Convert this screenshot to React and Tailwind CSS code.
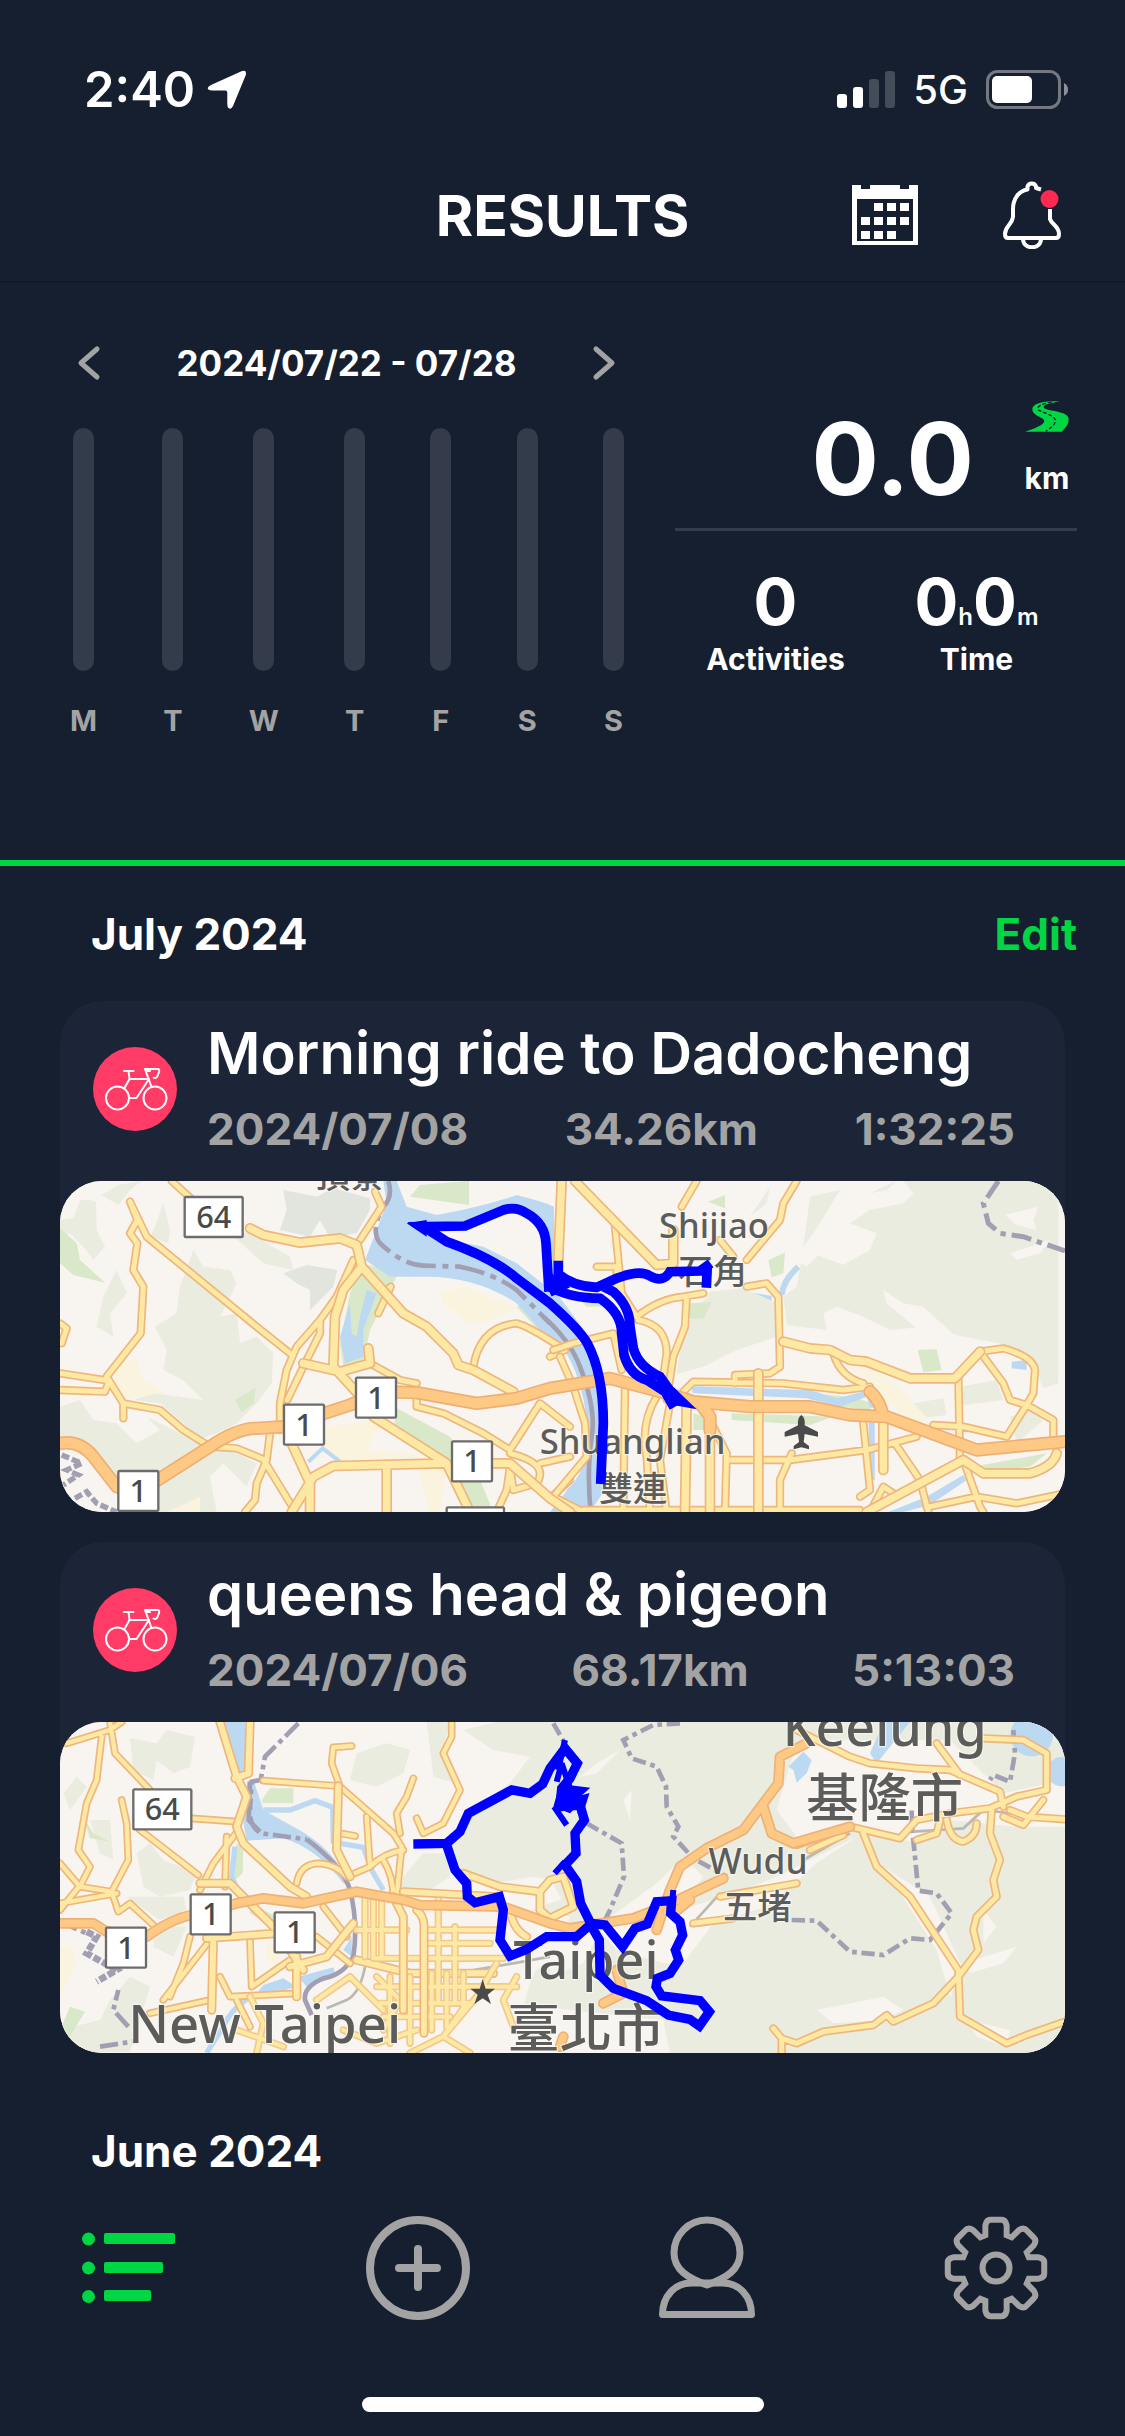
import React from "react";

const DAYS = ["M", "T", "W", "T", "F", "S", "S"];

function LocationArrow() {
  return (
    <svg className="h-10 w-10" viewBox="0 0 40 40" fill="#fff" aria-hidden="true">
      <path d="M34.500 1.300 Q40 -0.500 38.800 5 L26 36 Q24 40 21.500 38 Q20.300 37 20.300 34 V22.500 Q20.300 20.500 18.300 20.500 H5 Q0.500 20.300 0.800 18 Q1 16.300 4 15Z" />
    </svg>
  );
}

function Signal() {
  return (
    <svg className="h-[38px] w-[58px]" viewBox="0 0 58 38" aria-label="Signal">
      <rect x="0" y="23" width="10" height="14" rx="3" fill="#fff" />
      <rect x="16" y="16" width="10" height="21" rx="3" fill="#fff" />
      <rect x="32" y="8" width="10" height="29" rx="3" fill="#454c59" />
      <rect x="48" y="0" width="10" height="37" rx="3" fill="#454c59" />
    </svg>
  );
}

function Battery() {
  return (
    <svg className="h-[39px] w-[83px]" viewBox="0 0 83 39" aria-label="Battery">
      <rect x="1.500" y="1.500" width="72" height="36" rx="10" fill="none" stroke="#737883" strokeWidth="3" />
      <rect x="6" y="6" width="40" height="27" rx="5" fill="#fff" />
      <path d="M78 13 Q82 15 82 19.500 Q82 24 78 26Z" fill="#8b909a" />
    </svg>
  );
}

function CalendarIcon() {
  const cells = [
    [22, 18], [35, 18], [48, 18],
    [9, 32], [22, 32], [35, 32], [48, 32],
    [9, 46], [22, 46], [35, 46],
  ];
  return (
    <svg className="h-[60px] w-[66px]" viewBox="0 0 66 60" aria-hidden="true">
      <path fill="#fff" fillRule="evenodd" d="M0 0H9V4H18V0H48V4H57V0H66V60H0ZM5 14V56H61V14Z" />
      {cells.map(([x, y]) => (
        <rect key={x + "-" + y} x={x} y={y} width="9" height="8" fill="#fff" />
      ))}
    </svg>
  );
}

function BellIcon() {
  return (
    <svg className="h-[68px] w-[58px]" viewBox="0 0 58 68" fill="none" stroke="#fff" strokeWidth="4" strokeLinecap="round" strokeLinejoin="round" aria-hidden="true">
      <path strokeLinecap="butt" d="M38 8.500 L33 7 V5.500 A4.500 4.500 0 0 0 24.500 5.500 V8.500 C15 10 10 19 10 28 V36 C9 44 2 45 2 53 C2 56 3 57 5 57 H53 C55 57 56 56 56 53 C56 45 49 44 47 38 V28" />
      <path d="M20 58 C20 69 38 69 38 58" />
      <circle cx="46.500" cy="18" r="9" fill="#ff2850" stroke="none" />
    </svg>
  );
}

function RoadIcon() {
  return (
    <svg className="h-[31px] w-[44px]" viewBox="1156 154 132 93" aria-hidden="true">
      <path fill="#00d544" d="M1260 155 C1210 152 1178 162 1178 178 C1178 200 1214 202 1214 214 C1214 226 1180 238 1157 246 H1265 C1282 232 1287 220 1287 207 C1284 182 1212 185 1212 173 C1212 163 1240 160 1260 155Z" />
      <path fill="none" stroke="#161f2f" strokeWidth="4" strokeDasharray="11 6" d="M1236 158 C1206 162 1192 170 1195 179 C1200 188 1248 194 1247 214 C1246 226 1232 236 1218 245" />
    </svg>
  );
}

function BikeIcon() {
  return (
    <svg className="size-[84px]" viewBox="93 1046 84 84" fill="none" stroke="#fff" strokeWidth="2" strokeLinecap="round" strokeLinejoin="round" aria-hidden="true">
      <circle cx="117.500" cy="1097" r="11.500" />
      <circle cx="155" cy="1097" r="11.500" />
      <path d="M124 1070 H133.500 M128.500 1070 L129.500 1078 L124.500 1087 M129.500 1078 H149 M129 1097 H136.500 L149 1078" />
      <path d="M151.500 1086 L145 1068 H157.500 Q160 1068 159 1071 L157.500 1075 Q156 1078 153.500 1076.500 M146 1070 H150" />
    </svg>
  );
}

function Chevron({ flip }) {
  return (
    <svg className={flip ? "h-9 w-6 rotate-180" : "h-9 w-6"} viewBox="0 0 24 36" fill="none" stroke="#a3a3a3" strokeWidth="5" strokeLinecap="round" strokeLinejoin="round" aria-hidden="true">
      <path d="M20 4 L4 18 L20 32" />
    </svg>
  );
}

/* Draws every road twice: a darker casing first, the lighter surface on top. */
function Roads({ d, width, casing = "#eeb67c", fill = "#fde9a4" }) {
  return (
    <g fill="none" strokeLinejoin="round" strokeLinecap="round">
      <path d={d} stroke={casing} strokeWidth={width + 10} />
      <path d={d} stroke={fill} strokeWidth={width} />
    </g>
  );
}

function Shield({ x, y, w, children }) {
  return (
    <g>
      <rect x={x} y={y} width={w} height="120" rx="4" fill="#fff" stroke="#6c6c6c" strokeWidth="7" />
      {children && (
        <text x={x + w / 2} y={y + 93} textAnchor="middle" fontSize="92" fontWeight="500" fill="#4a4a4a">{children}</text>
      )}
    </g>
  );
}

function Place({ x, y, size, children }) {
  return (
    <text x={x} y={y} fontSize={size} textAnchor="middle" fontWeight="500" fill="#5c5c5a" stroke="#fbf9f5" strokeOpacity="0.7" strokeWidth="7" strokeLinejoin="round" paintOrder="stroke">
      {children}
    </text>
  );
}

const MAP_CLASS = "block aspect-[1005/331] w-full rounded-[42px] bg-[#f8f4f0] font-['Noto_Sans','Noto_Sans_CJK_TC',sans-serif]";

function DadochengMap() {
  return (
    <svg className={MAP_CLASS} viewBox="30 33 3015 993" preserveAspectRatio="xMidYMid slice" role="img" aria-label="Route map of the ride to Dadocheng">
      <rect x="30" y="33" width="3015" height="993" fill="#f8f4f0" />
      <g fill="#e9ecdf">
        <path d="M120 90 L138 95 L140 180 L165 230 L130 270 L100 230 L60 190 L30 200 V150 L70 145 L90 90Z" />
        <path d="M205 45 L275 33 L240 60 L205 105 L155 75Z" />
        <path d="M315 170 L340 100 L360 180 L355 220 L300 200Z" />
        <path d="M430 240 L460 290 L540 300 L560 340 L510 440 L560 430 L570 520 L620 500 L670 550 L665 640 L620 700 L560 760 L500 790 L440 810 L400 760 L330 700 L250 690 L310 670 L460 690 L400 630 L340 600 L350 540 L315 470 L380 430 L390 350Z" />
        <path d="M30 710 L90 690 L130 750 L200 760 L260 820 L330 780 L290 740 L390 790 L470 830 L560 850 L620 880 L590 950 L520 880 L480 920 L500 1026 L200 1026 L210 950 L140 860 L30 800Z" />
        <path d="M530 180 L600 190 L720 260 L730 300 L640 280Z M200 300 L230 370 L180 430 L190 500 L140 470 L160 380Z" />
      </g>
      <path fill="#e1e5de" d="M700 60 L800 80 L850 55 L960 85 L960 120 L920 190 L840 205 L810 150 L780 200 L690 180 L710 120Z M700 310 L770 285 L862 300 L850 350 L780 420 L780 360 L740 340Z" />
      <path fill="#faf3dd" d="M1170 365 L1250 350 L1400 415 L1330 450 L1250 460 L1180 400Z M830 770 L1000 750 L950 840 L1150 860 L860 885 L820 830Z M1100 890 L1190 895 L1170 1026 L1140 1026Z M200 580 L260 565 L275 625 L340 670 L230 685 L190 650Z M350 1026 L450 980 V1026Z" />
      <g fill="#d9e8c8">
        <path d="M30 175 L80 220 L90 270 L165 338 L70 315 L30 280Z M1110 45 L1257 33 V105 L1080 80Z M555 690 L617 653 L612 700 L575 727Z" />
        <path d="M935 280 L1045 310 L960 480 L940 575 L880 590 L870 520 L900 370Z M1040 715 L1200 800 L1290 930 L1330 1026 H1265 L1180 880 L1030 780Z M1420 400 L1480 430 L1560 540 L1520 540 L1400 410Z" />
      </g>
      <g fill="#bdd9f2">
        <path d="M1000 33 H1040 L1070 110 L1160 135 Q1300 110 1400 75 Q1480 95 1512 110 V360 L1580 450 Q1650 540 1665 760 V960 L1620 1026 L1530 1000 L1550 960 Q1620 900 1610 760 Q1600 620 1530 520 L1480 490 L1400 400 Q1280 320 1130 320 L1020 320 L945 270 L980 180 L1010 100Z" />
        <path d="M950 360 L980 370 L940 480 L940 560 L885 580 L870 500 L900 400 L905 490 L920 500 L930 440Z M1500 1026 L1560 950 V1026Z" />
      </g>
      <path fill="#f8f4f0" d="M1110 175 L1250 182 L1390 120 L1450 150 L1475 200 L1490 350 L1400 280 L1300 230 L1170 205Z" />
      <path fill="none" stroke="#bdd9f2" strokeWidth="12" d="M775 875 L818 835 L870 875" />
      <g transform="translate(1500 0)">
        <path fill="#e9ecdf" d="M900 160 L960 120 L1060 100 L1090 70 L1060 33 H1525 V640 L1480 655 L1450 580 L1350 520 L1240 500 L1120 470 L1020 480 L940 440 L860 410 L820 430 L830 480 L710 465 L700 380 L740 350 L760 240 L880 285 L960 240 L980 190Z M480 365 L580 355 L680 400 L680 500 L560 540 L460 590 L380 612 L400 480Z M600 140 L660 50 L650 100Z M780 80 L870 60 L840 110 L790 190 L760 230Z M960 70 L1040 33 L1010 60Z M1230 650 L1340 630 L1360 690 L1240 705Z M1090 700 L1180 685 L1190 735 L1110 745Z M1380 740 L1440 720 L1480 750 L1400 820Z" />
        <path fill="#f8f4f0" d="M1365 135 L1465 110 L1450 150 L1460 180 L1400 165Z M1000 360 L1060 400 L1120 410 L1240 520 L1130 500 L1010 400Z M1380 250 L1500 210 L1470 250 L1400 270Z M800 180 L860 190 L800 260 L770 290 L740 270Z" />
        <path fill="#d9e8c8" d="M475 95 L525 75 V115Z M655 270 L705 248 L700 310 L665 322Z M420 400 L485 395 L460 445 L420 447Z M1103 540 L1160 538 L1175 600 L1120 607Z M545 730 L850 740 L780 765 L545 750Z M430 730 L465 740 V780 H430Z M1270 890 L1490 850 L1440 890 L1320 905Z M780 670 L900 680 L970 700 L960 720 L830 705Z M80 380 L170 395 L160 410 L110 410Z" />
        <path fill="#faf3dd" d="M890 590 L990 600 L1140 750 L1100 755 L1010 700 L960 630Z" />
        <path fill="#bdd9f2" d="M420 648 L600 655 L780 660 L860 685 L960 660 L982 715 L960 712 L950 680 L870 712 L770 685 L430 670Z M1385 575 L1430 570 V600 L1385 595Z M1015 1026 L1130 980 L1240 915 L1250 930 L1140 1005 L1060 1026Z M610 368 L665 378 V392Z" />
        <path fill="none" stroke="#bdd9f2" strokeWidth="18" d="M965 755 V930 M745 290 Q700 330 695 375" />
      </g>
      <path fill="none" stroke="#a29fb2" strokeWidth="14" strokeDasharray="90 20 18 20" d="M1015 33 Q1030 80 1000 110 Q960 180 990 220 Q1060 285 1120 287 L1230 290 Q1330 310 1400 360 L1500 460" />
      <path fill="none" stroke="#a29fb2" strokeWidth="14" d="M1480 440 Q1560 510 1590 590 Q1640 720 1625 800 Q1610 900 1622 1026" />
      <path fill="none" stroke="#a29fb2" strokeWidth="15" strokeDasharray="60 18 16 18" d="M2845 33 L2800 100 L2815 160 L2850 190 L2920 200 L3045 243" />
      <path fill="none" stroke="#a29fb2" strokeWidth="16" strokeDasharray="24 9" d="M35 855 L95 880 L50 900 L85 915 L40 945 M75 985 L110 965 L140 1000 L200 1026" />
      <Roads width={15} d="M240 95 L262 150 L240 190 L262 220 L250 300 L280 350 L272 490 L170 620 L220 700 L220 745 M240 95 L290 200 L620 470 L720 550 M30 610 L175 632 M30 660 L165 665 L178 632 M220 700 L330 720 L400 780 L480 830 L560 835 L640 868 L730 1015 M660 790 L650 870 L620 940 L615 990 L585 1026 M365 33 L450 110 M975 65 L995 110 L930 210 M1270 590 Q1290 470 1400 460 Q1440 470 1545 540 L1500 560 M1010 360 L1022 350 L985 430 M910 270 L860 380 L810 450 L740 530 L710 600 L690 700 V780 M810 450 V490 L760 590 L712 690 M960 580 L1050 630 L1100 640 M1100 690 V710 L1180 730 L1300 790 L1380 840 L1470 700 L1560 770 M1380 850 Q1500 880 1460 940 L1390 960 L1380 890 L1370 960 L1340 1026 M1500 985 L1560 930 M1470 880 L1560 860 M30 460 L50 475 L35 520" />
      <Roads width={15} d="M1640 290 H1700 V370 M1895 110 L1940 33 M1695 170 L1715 370 L1760 440 Q1830 385 1900 380 L1960 370 M2240 33 L2200 100 L2190 150 L2090 270 M2010 210 L2050 260 M1910 380 L1905 470 L1870 560 L1850 690 M1765 450 Q1850 465 1850 550 L1840 620 M2090 350 L2150 340 L2185 380 L2190 590 L2160 610 L2055 615 V640 M2350 550 Q2370 620 2440 640 M1900 665 L1930 635 L2200 640 L2380 660 L2460 650 M2030 870 L2220 870 L2450 840 L2600 800 M2225 850 L2190 930 V1026 M2440 760 L2460 960 L2430 980 M2535 820 L2610 930 L2635 1026 M2740 870 L2790 1010 L2800 1026 M2460 1026 L2500 950 L2530 970 M2630 1012 L2780 980 L2900 1000 L3045 970 M1510 540 L1570 520 L1690 490 L1715 600 M1530 560 L1570 650 L1605 760 L1610 860 L1510 980 L1600 1026 M1725 650 L1720 1026 M1820 680 Q1770 760 1790 860 L1800 1026 M1860 700 L1830 870 L1850 1026 M1990 770 L2030 850 L2025 1026 M1600 1020 H2430 M2725 620 L2730 870 M2650 765 L2740 770 L2870 800 L2930 705 L3010 750 V820 M2790 545 L2860 640 L2880 690 L2930 705 L2950 670 L2955 600 Q2950 560 2860 535 L2790 545" />
      <Roads width={22} d="M600 175 L640 195 L750 218 L870 205 L920 225 L935 290 L880 360 L855 440 L850 590 L950 700 M760 580 L870 605 L960 580 L955 535 M935 290 L1060 430 L1130 470 L1210 550 L1225 585 L1270 600 L1390 665 M720 810 L780 940 V1026 M725 1026 L790 920 L850 888 L1180 880 M1330 880 H1380 L1500 985 L1560 1026 M1010 885 V1026 M970 740 L1190 880 L1260 1026 M1535 33 L1525 270 M1575 33 L1820 285 L1870 280 V180 M2200 515 L2280 535 L2340 540 L2400 570 L2450 575 L2580 625 L2715 625 L2790 545 M2125 610 V1026 M1910 700 L1905 1026 M1980 740 V1026 M2500 760 V900 M2450 1026 L2740 870 L2800 910 L2940 910 Q3010 890 3020 850" />
      <Roads width={30} casing="#efaf72" fill="#fdc985" d="M30 820 Q90 810 130 860 L200 950 L260 970 L480 830 Q560 775 620 775 L700 770 L900 705 L1000 665 L1100 668 L1280 700 L1400 685 L1500 655 L1680 625 L1850 670 L1930 695 L2100 710 L2280 710 L2400 735 L2510 740 L2780 840 L3045 815 M1950 700 L1980 740 V780 M2500 740 Q2490 690 2460 665" />
      <Shield x={404} y={81} w={174}>64</Shield>
      <Shield x={702} y={704} w={120}>1</Shield>
      <Shield x={918} y={623} w={120}>1</Shield>
      <Shield x={1206} y={814} w={120}>1</Shield>
      <Shield x={205} y={903} w={120}>1</Shield>
      <Shield x={1190} y={1012} w={172} />
      <Place x={900} y={53} size={103}>頂寮</Place>
      <Place x={1992} y={203} size={104}>Shijiao</Place>
      <Place x={1988} y={342} size={103}>石角</Place>
      <Place x={1748} y={852} size={104}>Shuanglian</Place>
      <Place x={1749} y={992} size={103}>雙連</Place>
      <path fill="#4a4a4a" d="M2254 735 Q2266 742 2264 766 L2304 786 V800 L2264 792 L2261 816 L2277 828 V838 L2254 832 L2231 838 V828 L2247 816 L2244 792 L2204 800 V786 L2244 766 Q2242 742 2254 735Z" />
      <g fill="none" stroke="#0000ff" strokeWidth="29" strokeLinejoin="miter">
        <path d="M1497 365 L1488 220 Q1485 160 1430 130 Q1400 108 1360 120 L1245 168 L1120 170 L1190 215 Q1330 265 1400 325 L1500 400 Q1590 480 1612 520 Q1660 610 1660 760 L1652 942" />
        <path d="M1525 272 V312 Q1570 350 1640 352 L1700 325 Q1770 298 1800 318 Q1840 340 1860 305 L1950 303 L1982 280 M1972 285 L1969 353" />
        <path d="M1500 350 Q1560 385 1650 385 Q1715 430 1715 490 L1722 555 Q1740 615 1790 630 L1845 665 L1872 712 M1660 350 L1690 365 Q1740 410 1740 470 L1750 535 Q1765 590 1830 620 L1880 690" />
        <path strokeWidth="22" d="M1500 320 L1540 350 L1500 370" />
      </g>
      <path fill="#00f" d="M1070 160 L1130 150 V200Z M1870 650 L1940 718 L1870 705Z" />
    </svg>
  );
}

function PigeonMap() {
  return (
    <svg className={MAP_CLASS} viewBox="30 36 3015 993" preserveAspectRatio="xMidYMid slice" role="img" aria-label="Route map of the ride to queens head">
      <rect x="30" y="36" width="3015" height="993" fill="#f8f4f0" />
      <g fill="#e9ecdf">
        <path d="M240 85 L320 100 L350 60 L435 80 L420 170 L370 190 L320 150 L310 210 L250 180Z M80 200 L110 230 L60 300 L40 250Z M120 330 L180 330 L190 450 L150 430Z M260 430 L300 400 L340 450 L440 490 L420 540 L330 560 L280 530Z M230 560 L400 560 L410 600 L330 630Z M320 650 L410 650 L370 740 L310 710Z M30 960 L150 930 L180 870 L240 800 L300 830 L240 1026 H30Z" />
        <path d="M920 130 L1010 100 L1080 120 L1060 190 L980 230 L900 210Z M1130 36 H1200 L1175 130 L1220 220 L1150 200Z M1240 60 L1340 36 H1560 V520 L1450 500 L1330 520 L1220 480 L1190 400 L1260 300 L1380 220 L1440 140 L1330 120Z M1060 500 L1120 430 L1190 430 L1200 500 L1130 545 H1050Z M1440 600 L1560 560 V620Z" />
      </g>
      <path fill="#e9ecdf" d="M1500 36 H3045 V1029 H1860 L1840 930 L1560 900 L1400 880 L1420 800 L1500 760 L1560 620 L1500 500Z" />
      <g fill="#f8f4f0">
        <path d="M1820 520 L1900 440 L1960 500 L1880 600 L2030 560 L2180 500 L2280 450 L2420 380 L2300 460 L2150 590 L1990 640 L1900 760 L1840 760 L1700 720 L1640 650Z M2180 300 L2230 130 L2290 90 H2700 L2860 250 L3045 210 V350 L2900 350 L2700 330 L2600 400 L2380 340 L2240 380Z" />
        <path d="M1590 200 L1640 160 L1710 120 L1640 190Z M1720 270 L1745 240 L1740 330Z M1500 620 L1640 680 L1600 760 L1500 800Z M2500 470 L2640 560 L2740 780 L2700 860 L2660 720Z M2800 600 L2840 650 L2800 700Z M2740 760 L2900 710 L2860 760 L2760 790Z M2300 900 L2500 860 L2560 900 L2500 930 L2350 940Z M2750 930 L2880 960 L2870 1010 L2780 980Z" />
        <path d="M1270 740 L1480 720 L1440 820 L1380 1029 H1250Z" />
      </g>
      <path fill="#d9e8c8" d="M635 270 L660 235 H730 V280 H640Z M560 400 L580 420 L578 490 L555 510 L540 460Z M30 960 L60 890 L105 905 L60 980Z M600 580 L680 620 L660 650 L600 610Z M100 320 L130 370 L180 395 L120 385Z" />
      <path fill="#faf3dd" d="M30 720 L60 700 L80 760 L30 860Z M650 690 L700 720 L680 770 L650 750Z" />
      <g fill="#bdd9f2">
        <path d="M518 36 H585 L590 180 L565 192Z M592 215 H612 L640 300 L730 350 Q850 410 905 530 L880 520 Q800 415 700 385 L590 392 L580 340Z M620 850 L640 825 L700 805 L740 830 L650 855Z M745 800 L850 772 L860 800 L770 830Z M880 720 L905 680 V740Z" />
        <path d="M2215 170 L2260 125 L2285 150 L2270 190 L2240 218 L2230 180Z M2460 130 L2500 36 H2580 L2520 110 L2480 160Z" />
        <circle cx="2945" cy="75" r="64" />
        <circle cx="3035" cy="185" r="44" />
      </g>
      <g fill="none" stroke="#bdd9f2" strokeWidth="16">
        <path d="M640 300 L720 300 L795 272 L848 292 L850 400 M870 400 L940 412 L965 480 L1000 540 M555 410 L545 500 L572 560 M600 860 Q540 900 520 950 L470 1029" />
      </g>
      <g fill="none" stroke="#a29fb2" strokeWidth="14">
        <path strokeDasharray="55 14 14 14" d="M745 40 L645 140 L632 210 L605 215 L600 300 M600 320 Q610 370 650 372 L770 388 M30 635 L110 670 M235 950 L190 900 L205 840 M150 1010 L265 992" />
        <path strokeWidth="20" strokeDasharray="22 7" d="M110 665 L140 680 L110 730 L200 780 L140 815" />
        <path d="M600 215 L596 330 L630 365 M770 388 Q880 470 900 540 Q925 640 910 740 Q880 795 820 805 Q760 830 765 870 L785 915" />
        <path strokeDasharray="40 14 14 14" d="M1510 40 L1550 110 M1610 340 L1715 400 L1722 500 L1680 600 L1660 640 M1890 40 L1810 45 L1720 90 L1745 145 L1820 170 L1848 230 L1850 290 L1885 350 L1870 380 L1930 445 L2030 500 M2225 630 L2300 632 L2400 725 L2500 735 L2580 685 L2640 690 L2705 610 L2660 550 L2605 542 L2585 340 L2585 300 M2890 60 L2895 130 L2880 215 L2830 195 L2820 210" />
        <path stroke="#b8bab2" strokeWidth="8" d="M945 770 Q930 850 890 870 L830 895 M2590 365 L2740 355 L2800 300 L3045 330 M2400 370 L2260 450 M1270 780 L1390 760 L1500 740 M1920 650 L2010 550" />
      </g>
      <Roads width={13} d="M180 36 L195 130 L300 240 M155 80 L140 210 L110 280 L85 420 L120 470 L95 520 L30 600 M50 100 L180 60 L215 36 M30 460 L90 530 L185 545 L235 450 L230 340 L215 270 M185 545 L205 605 L240 580 L310 645 M270 360 L445 495 M425 325 L560 335 M640 212 L865 228 M905 108 L850 112 L845 160 L870 230 L1030 370 L1055 410 L1040 560 M1050 370 L1040 310 L1070 260 L1090 205 M1205 36 V80 L1180 130 L1230 240 L1180 340 L1120 370 L1100 325 M565 360 L490 460 L450 540 M530 380 L525 530 M740 520 Q750 460 810 460 Q860 465 890 500 L960 470 Q1000 430 1060 420 M950 320 L960 470 M870 370 L915 378 M1000 450 Q1030 500 1030 560 M420 680 L400 760 L360 860 M340 870 L480 690 M600 690 L605 830 L720 750 M510 800 L540 860 L740 850 M300 910 L480 870 M800 680 L900 760 M820 590 L890 680 M560 870 L600 950 M30 580 L200 550" />
      <Roads width={18} d="M510 36 L560 200 L590 260 L560 350 L580 400 L720 530 L770 560 M600 36 L595 190 L555 205 M865 228 L860 420 L900 500 M450 520 L540 520 L680 660 M470 685 L680 670 M490 690 L485 900 M720 770 L830 740 L910 640 M740 740 V860 M720 720 L760 780 M920 750 L1080 790 L1330 790" />
      <Roads width={12} casing="#f3c98b" d="M920 660 H1070 M1120 660 H1340 M1120 700 H1320 M980 745 H1360 M980 830 H1400 M990 880 H1260 M1000 920 H1200 M945 560 V740 M970 560 V745 M995 560 V740 M1020 800 V1000 M1080 800 V1000 M1145 790 V960 M1165 560 V870 M1190 790 V950 M1215 650 V880 M1240 790 V900 M980 800 L1050 870 L1000 960 M1400 800 L1360 870 L1390 950 M800 870 L900 800 L1000 900 M880 960 L980 1000 L1100 960 M560 960 L700 1010 M1250 880 L1180 980 L1080 1029 M1340 760 L1280 860 L1180 980 L1260 1029 M600 860 L640 940 L620 1029" />
      <Roads width={17} d="M1030 560 L1060 620 V900 M1100 600 Q1125 620 1122 660 V970 M1380 600 Q1390 660 1430 680 M1240 490 L1350 530 L1470 545 L1500 510 L1540 500 L1570 590 L1500 625 L1470 600 V545 M1060 545 L1340 560" />
      <Roads width={15} d="M2140 285 L2165 370 L2240 405 L2400 350 L2550 385 L2600 330 L2700 310 L2820 295 L2900 260 L2990 240 L2990 130 L2920 90 L2800 85 M2240 60 L2400 140 L2460 160 L2600 175 L2700 180 L2850 245 L2860 290 M2660 100 L2730 195 M2440 370 L2480 470 L2580 560 L2725 780 L2730 920 L2870 1000 L2930 975 L3045 935 M2825 300 L2820 370 L2850 450 L2830 510 L2840 560 L2780 620 L2770 660 L2785 720 L2725 800 L2650 880 L2530 935 L2510 915 L2470 945 L2320 965 L2240 1000 L2195 985 L2170 955 M2195 990 V1029 M2880 300 L2930 320 L3045 328 M1930 640 L2050 625 M2010 560 L2240 520 M2280 420 L2380 375 M2600 390 L2660 370 L2670 330 M2690 330 Q2700 390 2740 395 Q2780 380 2780 340 M2860 320 L2920 345 L2980 270" />
      <Roads width={22} casing="#efb176" fill="#fdc985" d="M30 640 L130 640 L170 665 L290 680 Q380 615 450 612 L560 580 L640 565 L760 580 L920 545 L1060 570 L1110 585 L1360 590 L1500 640 L1560 655 L1750 625 L1840 590 L2020 505 M2270 100 L2190 140 L2185 220 L2140 280 L2080 360 L1970 415 L1890 470 L1860 540 L1820 660 M2140 290 L2165 370 L2230 400 L2400 350 M1870 610 L1920 570 M1700 780 L1720 850 L1660 880 M1540 980 L1530 1010" />
      <Shield x={250} y={238} w={174}>64</Shield>
      <Shield x={422} y={553} w={120}>1</Shield>
      <Shield x={674} y={607} w={120}>1</Shield>
      <Shield x={168} y={653} w={120}>1</Shield>
      <path fill="#4a4a4a" d="M1298 808 L1307 836 H1335 L1313 854 L1323 882 L1298 865 L1273 882 L1283 854 L1261 836 H1289Z" />
      <Place x={644} y={998} size={158}>New Taipei</Place>
      <Place x={1608} y={808} size={156}>Taipei</Place>
      <Place x={1608} y={1012} size={157}>臺北市</Place>
      <Place x={2504} y={108} size={156}>Keelung</Place>
      <Place x={2504} y={320} size={157}>基隆市</Place>
      <Place x={2124} y={492} size={106}>Wudu</Place>
      <Place x={2122} y={628} size={103}>五堵</Place>
      <g fill="none" stroke="#0000ff" strokeWidth="28" strokeLinejoin="miter" strokeMiterlimit="3">
        <path d="M1090 402 L1190 400 L1230 365 L1255 310 L1385 240 L1440 250 L1478 222 L1500 175 L1545 115 L1582 160 L1560 205 L1535 235 L1530 290 L1590 285 L1603 330 L1575 370 L1578 430 L1545 465 L1580 515 L1592 580 L1622 640" />
        <path d="M1190 405 L1215 480 L1250 520 L1252 560 L1275 578 L1348 560 L1360 600 L1350 690 L1380 738 L1430 718 L1490 680 H1580 L1625 640 L1665 645 L1718 710 L1755 655 L1792 642 L1820 575 L1865 572 L1862 610 L1890 635 L1898 675 L1876 720 L1886 750 L1860 790 L1822 805 L1818 830 L1835 858 L1950 872 L1978 905 L1948 948 L1920 928 L1855 915 L1790 872 L1690 835 L1650 795 L1648 690 L1622 645" />
        <path strokeWidth="18" d="M1520 215 L1535 160 L1560 235 L1600 240 L1560 275 L1605 262 L1590 310 M1512 290 L1550 345 M1514 490 L1545 455 M1862 620 L1870 540 M1524 180 L1545 90" />
      </g>
      <path fill="#00f" d="M1530 220 L1570 235 L1600 270 L1560 310 L1510 290Z" />
    </svg>
  );
}

const RIDES = [
  { title: "Morning ride to Dadocheng", date: "2024/07/08", distance: "34.26km", time: "1:32:25", Map: DadochengMap },
  { title: "queens head & pigeon", date: "2024/07/06", distance: "68.17km", time: "5:13:03", Map: PigeonMap },
];

function RideCard({ ride }) {
  const { Map } = ride;
  return (
    <article className="rounded-[42px] bg-[#1b2537]">
      <div className="flex h-[180px] items-center gap-[30px] pr-[50px] pb-1 pl-[33px]">
        <span className="size-[84px] shrink-0 rounded-full bg-[#ff3b66]">
          <BikeIcon />
        </span>
        <div className="min-w-0 flex-1 pt-1">
          <h3 className="truncate text-[58px] leading-[76px] font-semibold">{ride.title}</h3>
          <p className="flex justify-between text-[44px] leading-[76px] font-bold text-[#a3a3a3]">
            <time>{ride.date}</time>
            <span>{ride.distance}</span>
            <span>{ride.time}</span>
          </p>
        </div>
      </div>
      <Map />
    </article>
  );
}

function MonthHeader({ children, action }) {
  return (
    <div className="flex h-[135px] items-center justify-between pr-12 pl-[91px] text-[44px] font-bold">
      <h2>{children}</h2>
      {action}
    </div>
  );
}

function gearPath() {
  const n = 8;
  let d = "";
  for (let i = 0; i < n; i++) {
    const base = (i * 2 * Math.PI) / n;
    const p = (r, deg) => {
      const a = base + (deg * Math.PI) / 180;
      return (52 + r * Math.sin(a)).toFixed(2) + " " + (52 - r * Math.cos(a)).toFixed(2);
    };
    d += (i ? "L" : "M") + p(34.500, -18) + "L" + p(44, -14) + "Q" + p(49.500, -11) + " " + p(48.500, -6);
    d += "L" + p(48.500, 6) + "Q" + p(49.500, 11) + " " + p(44, 14) + "L" + p(34.500, 18);
  }
  return d + "Z";
}

function TabBar() {
  return (
    <nav className="shrink-0" aria-label="Main">
      <div className="flex h-[122px] items-center justify-between px-[77px]">
        <a href="#results" aria-label="Results" aria-current="page">
          <svg className="h-[104px] w-[104px]" viewBox="0 0 104 104" fill="#00d544" aria-hidden="true">
            <circle cx="11.500" cy="23" r="6.500" />
            <circle cx="11.500" cy="52" r="6.500" />
            <circle cx="11.500" cy="80.500" r="6.500" />
            <rect x="27" y="17" width="71" height="11" rx="2" />
            <rect x="27" y="46" width="59" height="11" rx="2" />
            <rect x="27" y="74" width="47" height="11" rx="2" />
          </svg>
        </a>
        <a href="#add" aria-label="Add activity">
          <svg className="h-[104px] w-[104px]" viewBox="0 0 104 104" fill="none" stroke="#a3a3a3" strokeWidth="8" strokeLinecap="round" aria-hidden="true">
            <circle cx="52" cy="52" r="48" />
            <path d="M33 52 H71 M52 33 V71" />
          </svg>
        </a>
        <a href="#profile" aria-label="Profile">
          <svg className="h-[104px] w-[104px]" viewBox="0 0 104 104" fill="none" stroke="#a3a3a3" strokeWidth="7" strokeLinejoin="round" aria-hidden="true">
            <path d="M52 69 C33 62 19 54 19 37 A33 33 0 0 1 85 37 C85 54 71 62 52 69Z" />
            <path d="M7.500 98.500 C7.500 80 20 67 36 67 H68 C84 67 96.500 80 96.500 98.500Z" />
          </svg>
        </a>
        <a href="#settings" aria-label="Settings">
          <svg className="h-[104px] w-[104px]" viewBox="0 0 104 104" fill="none" stroke="#a3a3a3" strokeWidth="6" aria-hidden="true">
            <path d={gearPath()} />
            <circle cx="52" cy="52" r="13.500" />
          </svg>
        </a>
      </div>
      <div className="flex h-[107px] items-end justify-center pb-6">
        <div className="h-[15px] w-[402px] rounded-full bg-white" />
      </div>
    </nav>
  );
}

export default function App() {
  return (
    <div className="flex h-screen flex-col bg-[#161f2f] font-['Inter',sans-serif] text-white">
      <div className="flex h-[135px] shrink-0 items-center justify-between pt-11 pr-14 pl-[84px]">
        <div className="flex items-center gap-3">
          <span className="text-[49px] leading-none font-semibold">2:40</span>
          <LocationArrow />
        </div>
        <div className="flex items-center gap-[18px]">
          <Signal />
          <span className="text-[40px] leading-none font-medium">5G</span>
          <Battery />
        </div>
      </div>

      <header className="grid h-[148px] shrink-0 grid-cols-[1fr_auto_1fr] items-center border-b-2 border-[#111827] px-16 pt-[14px]">
        <span />
        <h1 className="text-[57px] leading-none font-bold">RESULTS</h1>
        <div className="flex items-center justify-end gap-[85px]">
          <button type="button" aria-label="Calendar"><CalendarIcon /></button>
          <button type="button" aria-label="Notifications"><BellIcon /></button>
        </div>
      </header>

      <section className="flex h-[577px] shrink-0 gap-[51px] pt-[54px] pr-12 pl-[70px]">
        <div className="flex-1">
          <div className="flex h-[52px] items-center justify-between pr-2 pl-[7px]">
            <button type="button" aria-label="Previous week"><Chevron /></button>
            <span className="text-[35px] leading-none font-bold">2024/07/22 - 07/28</span>
            <button type="button" aria-label="Next week"><Chevron flip /></button>
          </div>
          <ul className="mt-[39px] flex justify-between">
            {DAYS.map((day, i) => (
              <li key={i} className="flex flex-col items-center gap-8">
                <span className="h-[243px] w-[21px] rounded-full bg-[#343c4b]" />
                <span className="text-[29px] leading-9 font-bold text-[#a3a3a3]">{day}</span>
              </li>
            ))}
          </ul>
        </div>
        <div className="w-[402px]">
          <div className="mt-[60px] flex h-[134px] justify-end gap-[50px] border-b-[3px] border-[#343c4b] pr-[7px]">
            <span className="text-[100px] leading-[124px] font-bold">0.0</span>
            <div className="flex w-[46px] flex-col items-center gap-7 pt-1">
              <RoadIcon />
              <span className="text-[30px] leading-9 font-bold">km</span>
            </div>
          </div>
          <dl className="grid grid-cols-2 pt-8 text-center">
            <div className="flex flex-col-reverse">
              <dt className="text-[30px] leading-9 font-bold">Activities</dt>
              <dd className="text-[65px] leading-[78px] font-bold">0</dd>
            </div>
            <div className="flex flex-col-reverse">
              <dt className="text-[30px] leading-9 font-bold">Time</dt>
              <dd className="text-[65px] leading-[78px] font-bold">
                0<span className="text-2xl font-semibold">h</span>0<span className="text-2xl font-semibold">m</span>
              </dd>
            </div>
          </dl>
        </div>
      </section>

      <main className="min-h-0 flex-1 overflow-y-auto border-t-[6px] border-[#00d544] [scrollbar-width:none]">
        <MonthHeader
          action={<button type="button" className="font-bold text-[#00d544]">Edit</button>}
        >
          July 2024
        </MonthHeader>
        <ul className="flex flex-col gap-[30px] px-[60px]">
          {RIDES.map((ride) => (
            <li key={ride.title}><RideCard ride={ride} /></li>
          ))}
        </ul>
        <div className="mt-[30px]">
          <MonthHeader>June 2024</MonthHeader>
        </div>
      </main>

      <TabBar />
    </div>
  );
}
